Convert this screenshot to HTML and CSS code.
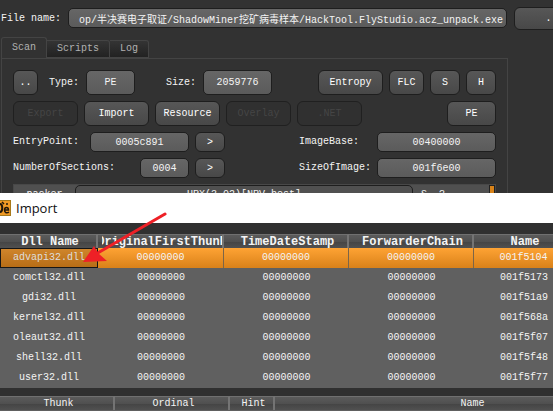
FILE: index.html
```html
<!DOCTYPE html>
<html lang="en">
<head>
<meta charset="utf-8">
<title>Import</title>
<link rel="stylesheet" href="styles.css">
</head>
<body>
<main class="app">
  <div class="file-row">
    <label for="file">File name:</label>
    <input class="field file" id="file" value="op/半决赛电子取证/ShadowMiner挖矿病毒样本/HackTool.FlyStudio.acz_unpack.exe">
    <button class="btn browse">...</button>
  </div>
  <nav class="tabs">
    <button class="tab active">Scan</button>
    <button class="tab">Scripts</button>
    <button class="tab">Log</button>
  </nav>
  <section class="pane">
    <div class="row">
      <button class="btn w25">..</button>
      <label class="type-label" for="type">Type:</label>
      <input class="field tall w49" id="type" value="PE">
      <label class="size-label" for="size">Size:</label>
      <input class="field tall w69" id="size" value="2059776">
      <div class="group end">
        <button class="btn w65">Entropy</button>
        <button class="btn w35">FLC</button>
        <button class="btn w30">S</button>
        <button class="btn w30">H</button>
      </div>
    </div>
    <div class="row">
      <div class="group">
        <button class="btn w65" disabled>Export</button>
        <button class="btn w65">Import</button>
        <button class="btn w65">Resource</button>
        <button class="btn w65" disabled>Overlay</button>
        <button class="btn w65" disabled>.NET</button>
      </div>
      <button class="btn w49 end">PE</button>
    </div>
    <div class="row">
      <div class="pair">
        <label for="entry">EntryPoint:</label>
        <input class="field w99" id="entry" value="0005c891">
      </div>
      <button class="btn short w30">&gt;</button>
      <div class="pair wide end">
        <label for="base">ImageBase:</label>
        <input class="field w119" id="base" value="00400000">
      </div>
    </div>
    <div class="row">
      <div class="pair">
        <label for="sections">NumberOfSections:</label>
        <input class="field w49" id="sections" value="0004">
      </div>
      <button class="btn short w30">&gt;</button>
      <div class="pair wide end">
        <label for="image">SizeOfImage:</label>
        <input class="field w119" id="image" value="001f6e00">
      </div>
    </div>
    <div class="results">
      <span class="kind">packer</span>
      <span class="found">UPX(3.02)[NRV,best]</span>
      <span class="scan">S  ?</span>
      <span class="thumb"></span>
    </div>
  </section>
</main>
<section class="dialog">
  <header class="titlebar">
    <svg class="logo" width="11" height="16" viewBox="0 0 11 16" aria-hidden="true">
      <rect width="11" height="16" fill="#a87a1c"/>
      <rect width="10" height="14" y="1" fill="#f09a25"/>
      <path d="M0 4C3 4 3 12 0 12" fill="none" stroke="#21170a" stroke-width="2"/>
      <path d="M4.500 10H8.500C8.500 6.500 4.500 6.500 4.500 10C4.500 13 7 13.500 9 12" fill="none" stroke="#21170a" stroke-width="1.500"/>
      <path d="M2 2L4 4M6 4H8" stroke="#21170a" stroke-width="1.500"/>
    </svg>
    <h1>Import</h1>
  </header>
  <table class="imports">
    <colgroup><col class="c1"><col class="c2"><col class="c3"><col class="c4"><col class="c5"></colgroup>
    <thead><tr><th>Dll Name</th><th><span>OriginalFirstThunk</span></th><th>TimeDateStamp</th><th>ForwarderChain</th><th>Name</th></tr></thead>
    <tbody>
      <tr class="selected"><td>advapi32.dll</td><td>00000000</td><td>00000000</td><td>00000000</td><td>001f5104</td></tr>
      <tr><td>comctl32.dll</td><td>00000000</td><td>00000000</td><td>00000000</td><td>001f5173</td></tr>
      <tr><td>gdi32.dll</td><td>00000000</td><td>00000000</td><td>00000000</td><td>001f51a9</td></tr>
      <tr><td>kernel32.dll</td><td>00000000</td><td>00000000</td><td>00000000</td><td>001f568a</td></tr>
      <tr><td>oleaut32.dll</td><td>00000000</td><td>00000000</td><td>00000000</td><td>001f5f07</td></tr>
      <tr><td>shell32.dll</td><td>00000000</td><td>00000000</td><td>00000000</td><td>001f5f48</td></tr>
      <tr><td>user32.dll</td><td>00000000</td><td>00000000</td><td>00000000</td><td>001f5f77</td></tr>
    </tbody>
  </table>
  <table class="thunks">
    <colgroup><col class="t1"><col class="t2"><col class="t3"><col class="t4"></colgroup>
    <thead><tr><th>Thunk</th><th>Ordinal</th><th>Hint</th><th>Name</th></tr></thead>
  </table>
  <svg class="arrow" width="86" height="54" viewBox="0 0 86 54" aria-hidden="true">
    <path d="M83 3L14 43" stroke="#ee2026" stroke-width="3" stroke-linecap="round"/>
    <path d="M1 51L12 35L16 42L25 50Z" fill="#ee2026"/>
  </svg>
</section>
</body>
</html>
```
FILE: styles.css
```css
* { box-sizing: border-box; }
body {
  margin: 0;
  height: 100vh;
  overflow: hidden;
  display: flex;
  flex-direction: column;
  background: #323232;
  color: #f4f4f4;
  font: 10px/12px "Liberation Mono", "Noto Sans CJK SC", monospace;
}
button, input {
  margin: 0;
  font: inherit;
  color: inherit;
}
.app { height: 193px; overflow: hidden; flex: none; }
.file-row {
  display: flex;
  align-items: center;
  height: 36px;
  width: calc(100% + 42px);
}
.file-row label { width: 68px; padding: 2px 0 0 1px; flex: none; }
.field {
  height: 20px;
  padding: 0;
  border: 1px solid #1e1e1e;
  border-radius: 5px;
  background: linear-gradient(#666, #5b5b5b);
  text-align: center;
}
.file { flex: 1; min-width: 0; margin-right: 7px; text-align: right; padding-right: 3px; }
.btn {
  height: 25px;
  padding: 1px 0 0;
  border: 1px solid #1e1e1e;
  border-radius: 6px;
  background: linear-gradient(#575757, #484848);
  color: #fff;
  white-space: nowrap;
}
.btn:disabled { background: #303030; border-color: #202020; color: #454545; }
.browse { width: 81px; height: 23px; flex: none; }
.tabs { display: flex; align-items: flex-end; height: 22px; padding-left: 1px; }
.tab {
  height: 18px;
  padding: 0 10px;
  border: 1px solid #444;
  border-left-width: 0;
  border-radius: 0 3px 0 0;
  background: linear-gradient(#343434, #222);
  color: #b1b1b1;
}
.tab.active {
  height: 21px;
  border-left-width: 1px;
  border-bottom: 0;
  border-radius: 3px 3px 0 0;
  background: #323232;
}
.pane {
  margin: 0 45px 0 1px;
  padding: 11px 11px 0;
  border: 1px solid #444;
  height: 145px;
  display: flex;
  flex-direction: column;
  gap: 6px;
}
.row { display: flex; align-items: center; flex: none; }
.group { display: flex; gap: 6px; }
.pair { display: flex; align-items: center; justify-content: space-between; width: 176px; margin-right: 6px; }
.pair.wide { width: 197px; margin-right: 0; }
.end { margin-left: auto; }
.short { height: 20px; }
.tall { height: 25px; }
.type-label { margin: 0 7px 0 11px; }
.size-label { margin: 0 7px 0 31px; }
.w25 { width: 25px; }
.w30 { width: 30px; }
.w35 { width: 35px; }
.w49 { width: 49px; }
.w65 { width: 65px; }
.w69 { width: 69px; }
.w99 { width: 99px; }
.w119 { width: 119px; }
.results {
  display: flex;
  flex: none;
  height: 24px;
  border: 1px solid #484848;
  background: #505050;
  white-space: pre;
  line-height: 20px;
}
.kind { width: 61px; text-align: center; }
.found {
  flex: 1;
  line-height: 18px;
  border: 1px solid #1e1e1e;
  border-radius: 5px;
  background: #505050;
  text-align: center;
}
.scan { width: 76px; padding-left: 8px; }
.thumb { width: 6px; border: 1px solid #222; background: #d98319; }
.dialog { position: relative; flex: 1; overflow: hidden; background: #606060; }
.titlebar {
  display: flex;
  align-items: center;
  gap: 5px;
  height: 30px;
  background: #fff;
  color: #111;
}
.titlebar h1 { margin: 0; font: 13px/18px "Open Sans", "Noto Sans", sans-serif; }
table { table-layout: fixed; border-collapse: separate; border-spacing: 0; }
.imports { width: calc(100% + 21px); border-top: 11px solid #303030; }
.c1 { width: 98px; }
.c2 { width: 126px; }
.c3, .c4 { width: 125px; }
th {
  height: 14px;
  padding: 0 0 0 4px;
  overflow: hidden;
  border-top: 1px solid #707070;
  border-right: 2px solid #747474;
  background: linear-gradient(#5b5b5b, #505050 50%, #454545 55%, #505050);
  font-size: 12px;
  line-height: 12px;
  white-space: nowrap;
}
th span { display: flex; justify-content: center; overflow: hidden; }
td { height: 20px; padding: 0; text-align: center; }
.selected td { border-right: 1px solid #7c6548; background: linear-gradient(#fea334, #d98119); }
.selected td:first-child { border: 1px solid #161616; background: linear-gradient(#cf852c, #b76d16); color: #dedede; }
.thunks { width: calc(100% + 115px); border-top: 8px solid #303030; }
.thunks th { font-size: 10px; font-weight: normal; }
.t1 { width: 115px; }
.t2 { width: 115px; }
.t3 { width: 45px; }
.arrow { position: absolute; left: 82px; top: 18px; }
```
